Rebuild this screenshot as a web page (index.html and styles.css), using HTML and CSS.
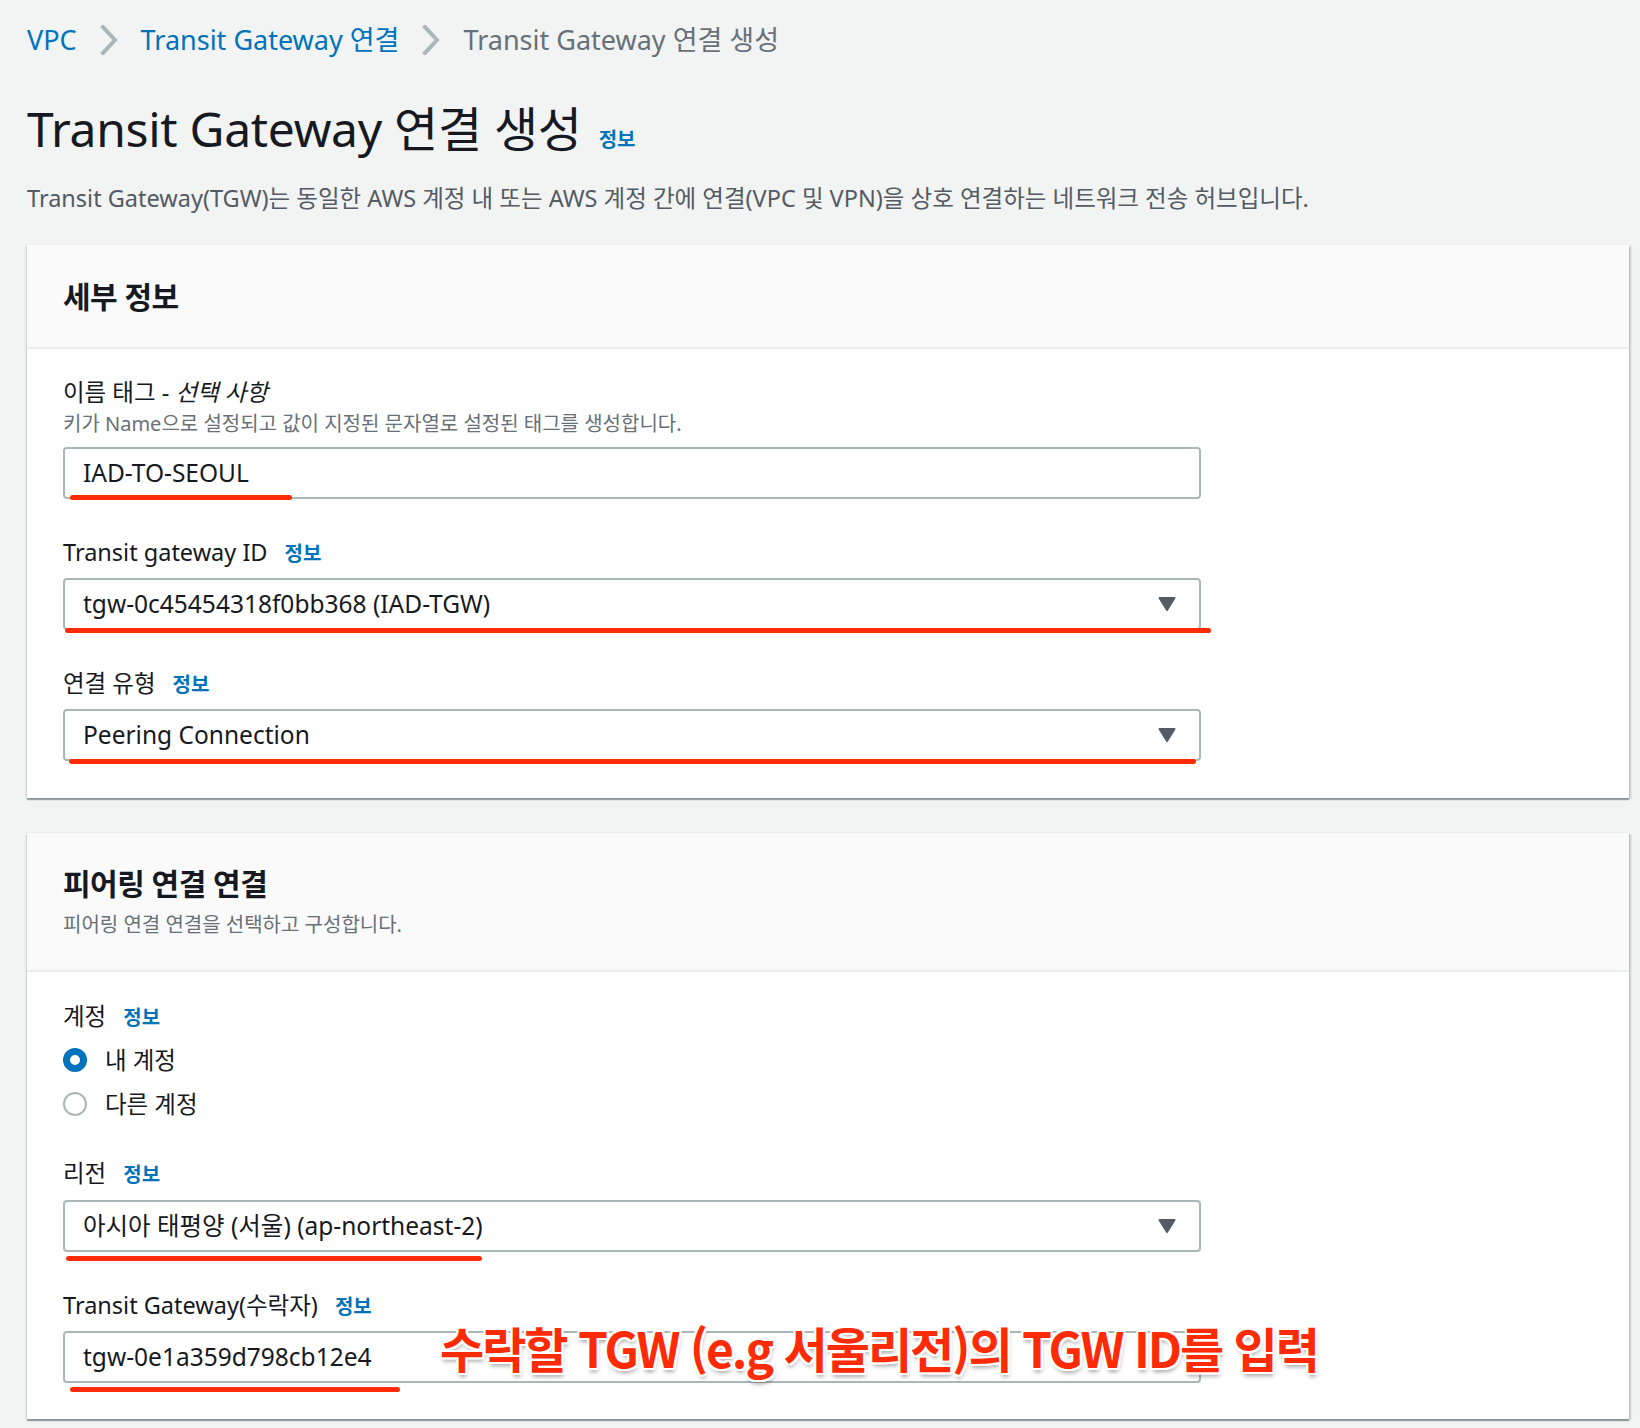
FILE: index.html
```html
<!DOCTYPE html>
<html lang="ko">
<head>
<meta charset="utf-8">
<title>Transit Gateway 연결 생성</title>
<link rel="stylesheet" href="styles.css">
</head>
<body>
<div class="page">
  <nav class="breadcrumbs">
    <a class="crumb crumb-link" href="#">VPC</a>
    <svg class="chev" viewBox="0 0 18 30" width="18" height="30"><polyline points="3,2 15,15 3,28" /></svg>
    <a class="crumb crumb-link" href="#">Transit Gateway 연결</a>
    <svg class="chev" viewBox="0 0 18 30" width="18" height="30"><polyline points="3,2 15,15 3,28" /></svg>
    <span class="crumb crumb-current">Transit Gateway 연결 생성</span>
  </nav>

  <header class="page-head">
    <h1 class="page-title">Transit Gateway 연결 생성<a class="info info-title" href="#">정보</a></h1>
    <p class="page-desc">Transit Gateway(TGW)는 동일한 AWS 계정 내 또는 AWS 계정 간에 연결(VPC 및 VPN)을 상호 연결하는 네트워크 전송 허브입니다.</p>
  </header>

  <section class="card">
    <div class="card-header card-header-simple">
      <h2 class="card-title">세부 정보</h2>
    </div>
    <div class="card-body">
      <div class="field">
        <div class="label">이름 태그 - <i class="optional">선택 사항</i></div>
        <div class="hint">키가 Name으로 설정되고 값이 지정된 문자열로 설정된 태그를 생성합니다.</div>
        <div class="control control-after-hint">
          <div class="input">IAD-TO-SEOUL</div>
          <span class="mark mark-name"></span>
        </div>
      </div>

      <div class="field">
        <div class="label">Transit gateway ID<a class="info" href="#">정보</a></div>
        <div class="control">
          <div class="input select">
            <span>tgw-0c45454318f0bb368 (IAD-TGW)</span>
            <svg class="caret" viewBox="0 0 20 16" width="20" height="16"><path d="M2.5 2 H17.5 L10 14 Z" /></svg>
          </div>
          <span class="mark mark-tgw"></span>
        </div>
      </div>

      <div class="field">
        <div class="label">연결 유형<a class="info" href="#">정보</a></div>
        <div class="control">
          <div class="input select">
            <span>Peering Connection</span>
            <svg class="caret" viewBox="0 0 20 16" width="20" height="16"><path d="M2.5 2 H17.5 L10 14 Z" /></svg>
          </div>
          <span class="mark mark-type"></span>
        </div>
      </div>
    </div>
  </section>

  <section class="card card-second">
    <div class="card-header card-header-desc">
      <h2 class="card-title">피어링 연결 연결</h2>
      <p class="card-desc">피어링 연결 연결을 선택하고 구성합니다.</p>
    </div>
    <div class="card-body card-body-second">
      <div class="field">
        <div class="label">계정<a class="info" href="#">정보</a></div>
        <div class="radio-group">
          <div class="radio-row"><span class="radio radio-checked"></span><span class="radio-label">내 계정</span></div>
          <div class="radio-row"><span class="radio"></span><span class="radio-label">다른 계정</span></div>
        </div>
      </div>

      <div class="field field-region">
        <div class="label label-region">리전<a class="info" href="#">정보</a></div>
        <div class="control">
          <div class="input select">
            <span>아시아 태평양 (서울) (ap-northeast-2)</span>
            <svg class="caret" viewBox="0 0 20 16" width="20" height="16"><path d="M2.5 2 H17.5 L10 14 Z" /></svg>
          </div>
          <span class="mark mark-region"></span>
        </div>
      </div>

      <div class="field">
        <div class="label">Transit Gateway(수락자)<a class="info" href="#">정보</a></div>
        <div class="control">
          <div class="input">tgw-0e1a359d798cb12e4</div>
          <span class="mark mark-accepter"></span>
          <span class="annotation">수락할 TGW (e.g 서울리전)의 TGW ID를 입력</span>
        </div>
      </div>
    </div>
  </section>
</div>
</body>
</html>
```

FILE: styles.css
```css
* {
  box-sizing: border-box;
}

html, body {
  margin: 0;
  padding: 0;
}

body {
  background: #f2f3f3;
  font-family: "Noto Sans", "Noto Sans CJK KR", sans-serif;
  color: #16191f;
}

.page {
  padding: 0 11px 9px 27px;
}

/* Breadcrumbs */
.breadcrumbs {
  display: flex;
  align-items: center;
  height: 30px;
  margin-top: 25px;
  font-size: 27px;
  line-height: 30px;
}

.crumb {
  text-decoration: none;
  white-space: nowrap;
}

.crumb-link {
  color: #0073bb;
}

.crumb-current {
  color: #687078;
}

.chev {
  margin: 0 23px 0 23px;
  flex: none;
}

.chev polyline {
  fill: none;
  stroke: #aab7b8;
  stroke-width: 4;
  stroke-linecap: square;
  stroke-linejoin: miter;
}

/* Page header */
.page-head {
  margin-top: 46px;
}

.page-title {
  margin: 0;
  font-size: 48px;
  line-height: 56px;
  font-weight: 400;
  color: #16191f;
  letter-spacing: -0.3px;
}

.info {
  font-size: 20px;
  font-weight: 700;
  color: #0073bb;
  text-decoration: none;
  margin-left: 17px;
  letter-spacing: 0;
}

.info-title {
  margin-left: 17px;
}

.page-desc {
  margin: 15px 0 0;
  font-size: 23.5px;
  line-height: 30px;
  color: #545b64;
}

/* Cards */
.card {
  margin-top: 32px;
  background: #ffffff;
  box-shadow: 0 2px 1px 0 rgba(0, 28, 36, 0.3), 2px 1px 2px 0 rgba(0, 28, 36, 0.18), -1px 1px 2px 0 rgba(0, 28, 36, 0.12);
}

.card-second {
  margin-top: 35px;
}

.card-header {
  background: #fafafa;
  border-bottom: 2px solid #eaeded;
  padding: 0 36px;
}

.card-header-simple {
  padding-top: 32px;
  padding-bottom: 30px;
}

.card-header-desc {
  padding-top: 31px;
  padding-bottom: 30px;
}

.card-title {
  margin: 0;
  font-size: 30px;
  line-height: 40px;
  font-weight: 700;
  letter-spacing: -0.5px;
  color: #16191f;
}

.card-desc {
  margin: 6px 0 0;
  font-size: 20px;
  line-height: 30px;
  color: #687078;
}

.card-body {
  padding: 28px 36px 37px;
}

.card-body-second {
  padding-top: 29px;
  padding-bottom: 36px;
}

/* Fields */
.field + .field {
  margin-top: 38px;
}

.field-region {
  margin-top: 32px !important;
}

.label {
  font-size: 23.5px;
  line-height: 30px;
  color: #16191f;
  margin-bottom: 9px;
}

.label-region {
  margin-bottom: 10px;
}

.optional {
  font-style: italic;
}

.hint {
  margin-top: -7px;
  font-size: 20px;
  line-height: 30px;
  color: #687078;
}

.control {
  position: relative;
  width: 1138px;
}

.control-after-hint {
  margin-top: 8px;
}

.input {
  height: 52px;
  border: 2px solid #aab7b8;
  border-radius: 4px;
  background: #ffffff;
  padding: 0 22px 0 18px;
  font-size: 24.5px;
  line-height: 48px;
  color: #16191f;
  white-space: nowrap;
}

.select {
  display: flex;
  align-items: center;
  justify-content: space-between;
}

.caret {
  flex: none;
}

.caret path {
  fill: #545b64;
  stroke: #545b64;
  stroke-width: 2;
  stroke-linejoin: round;
}

/* Radio */
.radio-group {
  margin-top: -4px;
}

.radio-row {
  display: flex;
  align-items: center;
  height: 44px;
}

.radio {
  width: 24px;
  height: 24px;
  border-radius: 50%;
  border: 2px solid #aab7b8;
  background: #ffffff;
  flex: none;
}

.radio-checked {
  border: 7px solid #0073bb;
}

.radio-label {
  margin-left: 18px;
  font-size: 23.5px;
  line-height: 30px;
  color: #16191f;
}

/* Annotation marks (red underline strokes drawn over the screenshot) */
.mark {
  position: absolute;
  height: 5px;
  border-radius: 3px;
  background: #ff2b06;
}

.mark-name {
  left: 7px;
  width: 222px;
  top: 48px;
}

.mark-tgw {
  left: 2px;
  width: 1146px;
  top: 50px;
}

.mark-type {
  left: 6px;
  width: 1127px;
  top: 50px;
}

.mark-region {
  left: 3px;
  width: 416px;
  top: 56px;
}

.mark-accepter {
  left: 7px;
  width: 330px;
  top: 56px;
}

.annotation {
  position: absolute;
  left: 377px;
  top: -12px;
  font-family: "Noto Sans CJK KR", sans-serif;
  font-size: 48px;
  line-height: 56px;
  font-weight: 700;
  letter-spacing: -2px;
  color: #ff2b06;
  white-space: nowrap;
  text-shadow:
    2px 0 0 #fff, -2px 0 0 #fff, 0 2px 0 #fff, 0 -2px 0 #fff,
    2px 2px 0 #fff, -2px -2px 0 #fff, 2px -2px 0 #fff, -2px 2px 0 #fff,
    1px 4px 4px rgba(0, 0, 0, 0.35);
}
```
